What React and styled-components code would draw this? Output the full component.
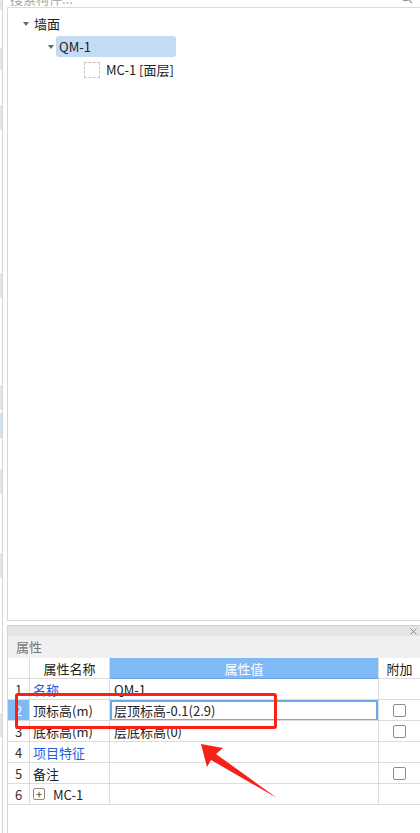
import React from 'react';
import styled, { createGlobalStyle } from 'styled-components';

const GlobalStyle = createGlobalStyle`
  html, body { margin: 0; padding: 0; background: #fff; }
  body {
    font-family: "Noto Sans CJK SC", "Noto Sans", sans-serif;
    font-size: 13px;
    color: #222;
  }
  * { box-sizing: border-box; }
`;

const Page = styled.div`
  position: relative;
  display: flex;
  width: 420px;
  height: 833px;
  overflow: hidden;
  background: #fff;
`;

const Strip = styled.div`
  width: 3px;
  flex-shrink: 0;
  display: flex;
  flex-direction: column;
  border-right: 1px solid #d6d6d6;
`;

const StripMark = styled.div`
  margin-top: ${p => p.$gap}px;
  height: ${p => p.$h}px;
  background: ${p => (p.$blue ? '#d2e2f6' : '#e6e6e6')};
`;

const Main = styled.div`
  flex: 1;
  min-width: 0;
  margin-left: 4px;
  display: flex;
  flex-direction: column;
`;

const SearchBar = styled.div`
  height: 8px;
  flex-shrink: 0;
  display: flex;
  align-items: flex-end;
  justify-content: space-between;
  overflow: hidden;
  border-bottom: 1px solid #dadada;
  padding: 0 7px 0 3px;
`;

const Placeholder = styled.span`
  color: #a9a9a9;
  line-height: 18px;
  margin-bottom: -1px;
  white-space: nowrap;
`;

const SearchIcon = styled.svg`
  width: 13px;
  height: 13px;
  margin-bottom: 3px;
  flex-shrink: 0;
`;

const TreePanel = styled.div`
  height: 613px;
  flex-shrink: 0;
  border-left: 1px solid #d6d6d6;
  border-bottom: 1px solid #d6d6d6;
  padding-top: 4px;
`;

const TreeRow = styled.div`
  display: flex;
  align-items: center;
  height: 23px;
  padding-left: ${p => 15 + p.$level * 25}px;
`;

const CaretSlot = styled.span`
  width: 8px;
  flex-shrink: 0;
  display: flex;
  align-items: center;
`;

const Caret = styled.span`
  width: 0;
  height: 0;
  border-left: 3px solid transparent;
  border-right: 3px solid transparent;
  border-top: 4px solid #6a6a6a;
`;

const TreeLabel = styled.span`
  display: flex;
  align-items: center;
  gap: 6px;
  height: 21px;
  padding: 0 3px;
  border-radius: 3px;
  width: ${p => (p.$selected ? '120px' : 'auto')};
  background: ${p => (p.$selected ? '#c4dbf4' : 'transparent')};
  color: #222;
  white-space: nowrap;
`;

const DashedIcon = styled.span`
  width: 16px;
  height: 16px;
  border: 1px dashed #c6c6c6;
  flex-shrink: 0;
`;

const PropsPanel = styled.div`
  flex: 1;
  margin-top: 4px;
  border-left: 1px solid #d6d6d6;
  border-top: 1px solid #d2d2d2;
  display: flex;
  flex-direction: column;
`;

const TitleStrip = styled.div`
  height: 10px;
  background: #e5e5e5;
  display: flex;
  justify-content: flex-end;
  align-items: center;
  padding-right: 3px;
`;

const CloseIcon = styled.svg`
  width: 7px;
  height: 7px;
`;

const SectionLabel = styled.div`
  height: 22px;
  line-height: 22px;
  padding-left: 8px;
  background: #f0f0f0;
  color: #777;
`;

const Row = styled.div`
  display: grid;
  grid-template-columns: 22px 80px 269px 1fr;
  height: 21px;
`;

const Cell = styled.div`
  position: relative;
  display: flex;
  align-items: center;
  justify-content: ${p => (p.$center ? 'center' : 'flex-start')};
  gap: 8px;
  padding: 0 ${p => (p.$center ? 0 : p.$pad || 3)}px;
  border-right: 1px solid #dcdcdc;
  border-bottom: 1px solid ${p => p.$bottom || '#dcdcdc'};
  background: ${p => p.$bg || '#fff'};
  color: ${p => p.$color || '#222'};
  white-space: nowrap;
  overflow: hidden;
  &:last-child { border-right: none; }
`;

const EditFrame = styled.div`
  position: absolute;
  inset: 0 0 -1px 0;
  border: 2px solid #6fa9e8;
  pointer-events: none;
`;

const Checkbox = styled.span`
  width: 13px;
  height: 13px;
  border: 1px solid #8c8c8c;
  border-radius: 2px;
  background: #fff;
`;

const PlusBox = styled.span`
  width: 12px;
  height: 12px;
  border: 1px solid #8c8c8c;
  border-radius: 2px;
  display: flex;
  align-items: center;
  justify-content: center;
  font-size: 11px;
  line-height: 1;
  color: #444;
`;

const Highlight = styled.div`
  position: absolute;
  left: 15px;
  top: 693px;
  width: 262px;
  height: 36px;
  border: 3.5px solid #fb1f14;
  border-radius: 3px;
  pointer-events: none;
`;

const Overlay = styled.svg`
  position: absolute;
  left: 0;
  top: 0;
  width: 420px;
  height: 833px;
  pointer-events: none;
`;

const marks = [
  { gap: 0, h: 10 },
  { gap: 38, h: 22 },
  { gap: 35, h: 25 },
  { gap: 143, h: 25 },
  { gap: 87, h: 25 },
  { gap: 3, h: 25, blue: true },
  { gap: 31, h: 25 },
  { gap: 59, h: 25 },
  { gap: 135, h: 24 },
];

const LINK = '#1f5fe0';

const rows = [
  { n: '1', name: '名称', link: true, value: 'QM-1' },
  { n: '2', name: '顶标高(m)', value: '层顶标高-0.1(2.9)', check: true, active: true },
  { n: '3', name: '底标高(m)', value: '层底标高(0)', check: true },
  { n: '4', name: '项目特征', link: true, value: '' },
  { n: '5', name: '备注', value: '', check: true },
  { n: '6', name: 'MC-1', plus: true, value: '' },
];

export default function App() {
  return (
    <Page>
      <GlobalStyle />
      <Strip>
        {marks.map((m, i) => (
          <StripMark key={i} $gap={m.gap} $h={m.h} $blue={m.blue} />
        ))}
      </Strip>
      <Main>
        <SearchBar>
          <Placeholder>搜索构件...</Placeholder>
          <SearchIcon viewBox="0 0 13 13" fill="none" stroke="#9a9a9a" strokeWidth="1.3">
            <circle cx="5.5" cy="5.5" r="4.2" />
            <path d="M8.6 8.6 L12 12" />
          </SearchIcon>
        </SearchBar>

        <TreePanel>
          <TreeRow $level={0}>
            <CaretSlot><Caret /></CaretSlot>
            <TreeLabel>墙面</TreeLabel>
          </TreeRow>
          <TreeRow $level={1}>
            <CaretSlot><Caret /></CaretSlot>
            <TreeLabel $selected>QM-1</TreeLabel>
          </TreeRow>
          <TreeRow $level={2}>
            <CaretSlot />
            <TreeLabel>
              <DashedIcon />
              MC-1 [面层]
            </TreeLabel>
          </TreeRow>
        </TreePanel>

        <PropsPanel>
          <TitleStrip>
            <CloseIcon viewBox="0 0 7 7" stroke="#8a8a8a" strokeWidth="1">
              <path d="M0.5 0.5 L6.5 6.5 M6.5 0.5 L0.5 6.5" />
            </CloseIcon>
          </TitleStrip>
          <SectionLabel>属性</SectionLabel>
          <Row>
            <Cell />
            <Cell $center>属性名称</Cell>
            <Cell $center $bg="#7fb9f6" $color="#fff" $bottom="#6aa6e8">属性值</Cell>
            <Cell $center>附加</Cell>
          </Row>
          {rows.map(r => (
            <Row key={r.n}>
              <Cell $center $bg={r.active ? '#7fb9f6' : '#fff'} $color={r.active ? '#fff' : '#333'}>
                {r.n}
              </Cell>
              <Cell $color={r.link ? LINK : '#222'}>
                {r.plus && <PlusBox>+</PlusBox>}
                {r.name}
              </Cell>
              <Cell $pad={4}>
                {r.value}
                {r.active && <EditFrame />}
              </Cell>
              <Cell $center>{r.check && <Checkbox />}</Cell>
            </Row>
          ))}
        </PropsPanel>
      </Main>

      <Highlight />
      <Overlay viewBox="0 0 420 833">
        <polygon
          points="201,744 223,748 216,754 277,798 211,760 207,767"
          fill="#f5221a"
        />
      </Overlay>
    </Page>
  );
}
